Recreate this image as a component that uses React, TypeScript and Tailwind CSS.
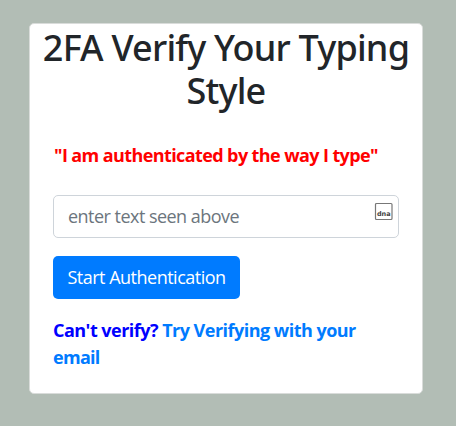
export default function App() {
  return (
    <main className="h-[426px] w-[456px] overflow-hidden bg-[#b2bdb5] pt-[23px] pl-[29px] font-['Open_Sans',sans-serif] text-[18px] leading-[27px]">
      <section className="h-[371px] w-[394px] rounded-[5px] border border-[#d9dcda] bg-white">
        <h1 className="flex flex-col items-center pt-[2px] font-['Noto_Sans',sans-serif] text-[36px] leading-[43px] font-medium tracking-[-0.8px] text-[#212529]">
          <span className="whitespace-nowrap">2FA Verify Your Typing</span>
          <span>Style</span>
        </h1>
        <div className="flex flex-col items-start px-[23px] pt-[30px]">
          <p className="pl-px font-bold tracking-[-0.6px] whitespace-nowrap text-[#ff0000]">
            <span>"I am authenticated by the way I type"</span>
          </p>
          <div className="mt-[26px] flex h-[43px] w-[346px] items-start justify-between rounded-[5px] border border-[#ced4da] pr-[5px] pl-[14px]">
            <span className="pt-[7px] tracking-[-0.53px] text-[#6c757d]">enter text seen above</span>
            <svg className="mt-[6px]" width="19" height="19" viewBox="0 0 19 19">
              <rect x="1.5" y="1.5" width="16.5" height="16" rx="1" fill="#fff" stroke="#777" strokeWidth="1.2" />
              <text x="9.8" y="13.5" textAnchor="middle" fontSize="6.5" fontWeight="700" fill="#444" fontFamily="DejaVu Sans">dna</text>
            </svg>
          </div>
          <button className="mt-[18px] h-[43px] w-[187px] rounded-[5px] bg-[#007bff] tracking-[-0.5px] whitespace-nowrap text-white">
            <span>Start Authentication</span>
          </button>
          <p className="mt-[18px] font-bold tracking-[-0.52px] whitespace-nowrap text-[#007bff]">
            <span className="text-[#0000ff]">Can't verify?</span> <span>Try Verifying with your</span>
            <br />
            <span className="tracking-[-0.7px]">email</span>
          </p>
        </div>
      </section>
    </main>
  );
}
